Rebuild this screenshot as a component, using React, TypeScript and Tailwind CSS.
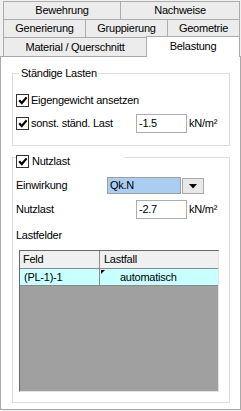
function Check() {
	return (
		<span className="flex h-[13px] w-[13px] shrink-0 items-center justify-center border border-[#333] bg-white">
			<svg width="10" height="9" viewBox="0 0 10 9">
				<path d="M1.2 4.2 L3.8 7 L8.6 1.4" fill="none" stroke="#000" strokeWidth="2.2" />
			</svg>
		</span>
	)
}

function Tab({ children, className }: { children: string; className: string }) {
	return (
		<div
			className={
				"flex h-[19px] items-center justify-center border border-[#acacac] bg-[#ececec] leading-none " +
				className
			}
		>
			{children}
		</div>
	)
}

export default function App() {
	return (
		<div className="h-[411px] w-[241px] overflow-hidden bg-[#f0f0f0] font-['Liberation_Sans',Arial,sans-serif] text-[11px] tracking-[-0.25px] text-black">
			{/* tab strip */}
			<div className="flex flex-col pl-[3px] pt-px">
				<div className="flex">
					<Tab className="w-[118px]">Bewehrung</Tab>
					<Tab className="-ml-px w-[120px]">Nachweise</Tab>
				</div>
				<div className="-mt-px flex">
					<Tab className="w-[83px]">Generierung</Tab>
					<Tab className="-ml-px w-[83px]">Gruppierung</Tab>
					<Tab className="-ml-px w-[73px]">Geometrie</Tab>
				</div>
				<div className="-mt-px flex h-[19px]">
					<Tab className="w-[144px] border-b-0">Material / Querschnitt</Tab>
					<div className="relative z-10 -mt-px -ml-px flex h-[21px] w-[94px] shrink-0 items-center justify-center border border-b-0 border-[#acacac] bg-white pb-[2px] leading-none">
						Belastung
					</div>
				</div>
			</div>

			{/* page */}
			<div className="h-[354px] w-[241px] border border-[#a9a9a9] bg-white">
				<fieldset className="mt-[9px] ml-[11px] w-[218px] border border-[#dcdcdc] px-[3px] pt-[14px] pb-[12px]">
					<legend className="ml-[3px] h-[14px] px-[2px] leading-[14px]">Ständige Lasten</legend>
					<div className="flex h-[13px] items-center gap-[2px]">
						<Check />
						<span>Eigengewicht ansetzen</span>
					</div>
					<div className="mt-[7px] flex h-[19px] items-center">
						<div className="flex w-[120px] items-center gap-[2px]">
							<Check />
							<span>sonst. ständ. Last</span>
						</div>
						<div className="flex h-[19px] w-[51px] items-center border border-[#abadb3] pl-[2px]">-1.5</div>
						<span className="ml-[2px]">kN/m²</span>
					</div>
				</fieldset>

				<fieldset className="mt-[6px] ml-[11px] w-[218px] border border-[#dcdcdc] px-[3px] pt-[15px] pb-[10px]">
					<legend className="h-[10px] w-[109px] bg-white">
						<div className="mt-[3px] flex items-center gap-[3px] leading-[13px]">
							<Check />
							<span>Nutzlast</span>
						</div>
					</legend>
					<div className="flex h-[17px] items-end">
						<span className="w-[91px] self-center">Einwirkung</span>
						<div className="flex h-[17px] w-[74px] items-center border border-[#a0a0a0] bg-[#a9cef1] pl-[2px]">
							Qk.N
						</div>
						<div className="ml-[1px] flex h-[16px] w-[22px] items-center justify-center border border-[#acacac] bg-[#e8e8e8]">
							<svg width="8" height="5" viewBox="0 0 8 5">
								<path d="M0 0 H8 L4 4.5 Z" fill="#000" />
							</svg>
						</div>
					</div>
					<div className="mt-[6px] flex h-[19px] items-center">
						<span className="w-[120px]">Nutzlast</span>
						<div className="flex h-[19px] w-[51px] items-center border border-[#abadb3] pl-[2px]">-2.7</div>
						<span className="ml-[2px]">kN/m²</span>
					</div>
					<div className="mt-[9px] flex h-[14px] items-center">Lastfelder</div>

					<div className="mt-[8px] ml-[3px] h-[142px] w-[200px] border border-t-[#696969] border-l-[#696969] border-r-[#e3e3e3] border-b-[#e3e3e3] bg-[#a0a0a0]">
						<div className="flex h-[18px] border-b border-[#8a8a8a] bg-[#f0f0f0]">
							<div className="flex w-[80px] items-center border-r border-[#8a8a8a] pl-[3px]">Feld</div>
							<div className="flex flex-1 items-center pl-[4px]">Lastfall</div>
						</div>
						<div className="flex h-[17px] border-b border-[#8a8a8a] bg-[#c8ffff]">
							<div className="flex w-[80px] items-center border-r border-[#8a8a8a] pl-[4px]">(PL-1)-1</div>
							<div className="relative flex flex-1 items-center pl-[20px]">
								<svg className="absolute top-[1px] left-[1px]" width="4" height="4" viewBox="0 0 4 4">
									<path d="M0 0 H4 L0 4 Z" fill="#000" />
								</svg>
								automatisch
							</div>
						</div>
					</div>
				</fieldset>
			</div>
		</div>
	)
}
